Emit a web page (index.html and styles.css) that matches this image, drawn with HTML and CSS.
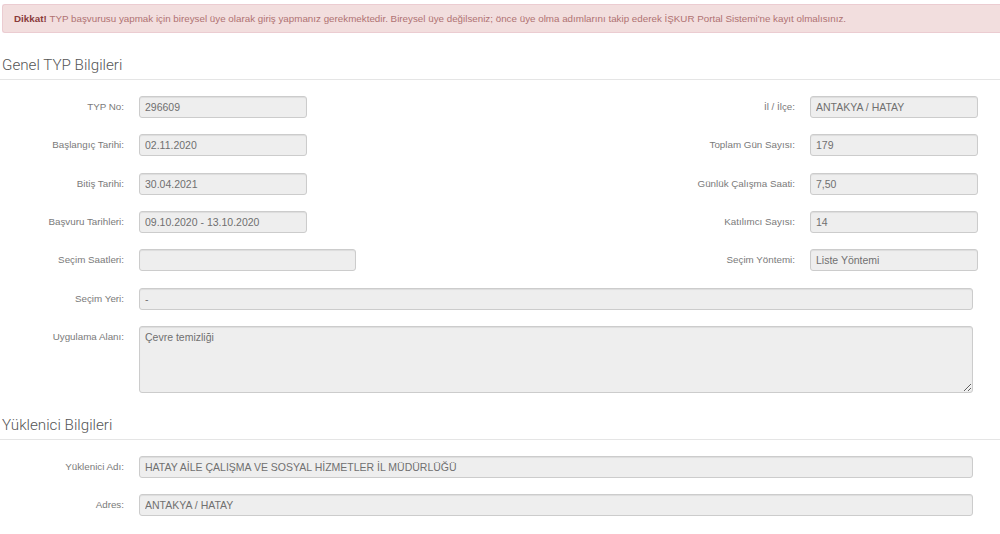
FILE: index.html
```html
<!DOCTYPE html>
<html lang="tr">
<head>
<meta charset="utf-8">
<title>TYP Bilgileri</title>
<link rel="stylesheet" href="styles.css">
</head>
<body>
<div class="alert"><strong>Dikkat!</strong>&nbsp;TYP başvurusu yapmak için bireysel üye olarak giriş yapmanız gerekmektedir. Bireysel üye değilseniz; önce üye olma adımlarını takip ederek İŞKUR Portal Sistemi'ne kayıt olmalısınız.</div>

<h2 class="section-title">Genel TYP Bilgileri</h2>
<div class="form-grid">
  <label class="lbl">TYP No:</label>
  <input class="field" readonly value="296609">
  <label class="lbl">İl / İlçe:</label>
  <input class="field" readonly value="ANTAKYA / HATAY">

  <label class="lbl">Başlangıç Tarihi:</label>
  <input class="field" readonly value="02.11.2020">
  <label class="lbl">Toplam Gün Sayısı:</label>
  <input class="field" readonly value="179">

  <label class="lbl">Bitiş Tarihi:</label>
  <input class="field" readonly value="30.04.2021">
  <label class="lbl">Günlük Çalışma Saati:</label>
  <input class="field" readonly value="7,50">

  <label class="lbl">Başvuru Tarihleri:</label>
  <input class="field" readonly value="09.10.2020 - 13.10.2020">
  <label class="lbl">Katılımcı Sayısı:</label>
  <input class="field" readonly value="14">

  <label class="lbl">Seçim Saatleri:</label>
  <input class="field field-md" readonly value="">
  <label class="lbl">Seçim Yöntemi:</label>
  <input class="field" readonly value="Liste Yöntemi">

  <label class="lbl">Seçim Yeri:</label>
  <input class="field field-full" readonly value="-">

  <label class="lbl lbl-top">Uygulama Alanı:</label>
  <textarea class="field field-full area" readonly>Çevre temizliği</textarea>
</div>

<h2 class="section-title section-second">Yüklenici Bilgileri</h2>
<div class="form-grid">
  <label class="lbl">Yüklenici Adı:</label>
  <input class="field field-full" readonly value="HATAY AİLE ÇALIŞMA VE SOSYAL HİZMETLER İL MÜDÜRLÜĞÜ">

  <label class="lbl">Adres:</label>
  <input class="field field-full" readonly value="ANTAKYA / HATAY">
</div>
</body>
</html>
```
FILE: styles.css
```css
html, body {
  margin: 0;
  padding: 0;
  background: #fff;
}

body {
  font-family: "Liberation Sans", Arial, sans-serif;
  color: #555;
  width: 1000px;
  overflow: hidden;
}

.alert {
  margin: 4px 0 0 2px;
  height: 29px;
  box-sizing: border-box;
  padding: 0 11px;
  display: flex;
  align-items: center;
  background: #f2dede;
  border: 1px solid #ebccd1;
  border-right: 0;
  border-radius: 3px 0 0 3px;
  color: #b07272;
  font-size: 9.8px;
  white-space: nowrap;
}

.alert strong {
  color: #8a3b3b;
  font-weight: bold;
}

.section-title {
  margin: 22px 0 0 0;
  padding: 0 0 4px 2px;
  height: 20px;
  font-family: Roboto, "Liberation Sans", sans-serif;
  font-weight: 300;
  font-size: 15.2px;
  line-height: 20px;
  color: #555;
  border-bottom: 1px solid #e5e5e5;
}

.section-second {
  margin-top: 22px;
}

.form-grid {
  display: grid;
  grid-template-columns: 124px 168px 1fr 168px;
  column-gap: 15px;
  row-gap: 16.33px;
  width: 978px;
  margin-top: 16px;
  align-items: center;
}

.lbl {
  font-size: 9.8px;
  color: #7a7a7a;
  text-align: right;
  line-height: 22px;
}

.lbl-top {
  align-self: start;
}

.field {
  box-sizing: border-box;
  height: 22px;
  margin: 0;
  padding: 0 5px;
  border: 1px solid #ccc;
  border-radius: 3px;
  background: #eee;
  box-shadow: inset 0 1px 1px rgba(0, 0, 0, 0.075);
  font-family: "Liberation Sans", Arial, sans-serif;
  font-size: 10.5px;
  color: #707070;
  outline: none;
  width: 168px;
}

.field-md {
  width: 217px;
}

.field-full {
  grid-column: 2 / 5;
  width: 834px;
}

.area {
  height: 67px;
  padding: 4px 5px;
  resize: vertical;
  line-height: 13px;
}
```
